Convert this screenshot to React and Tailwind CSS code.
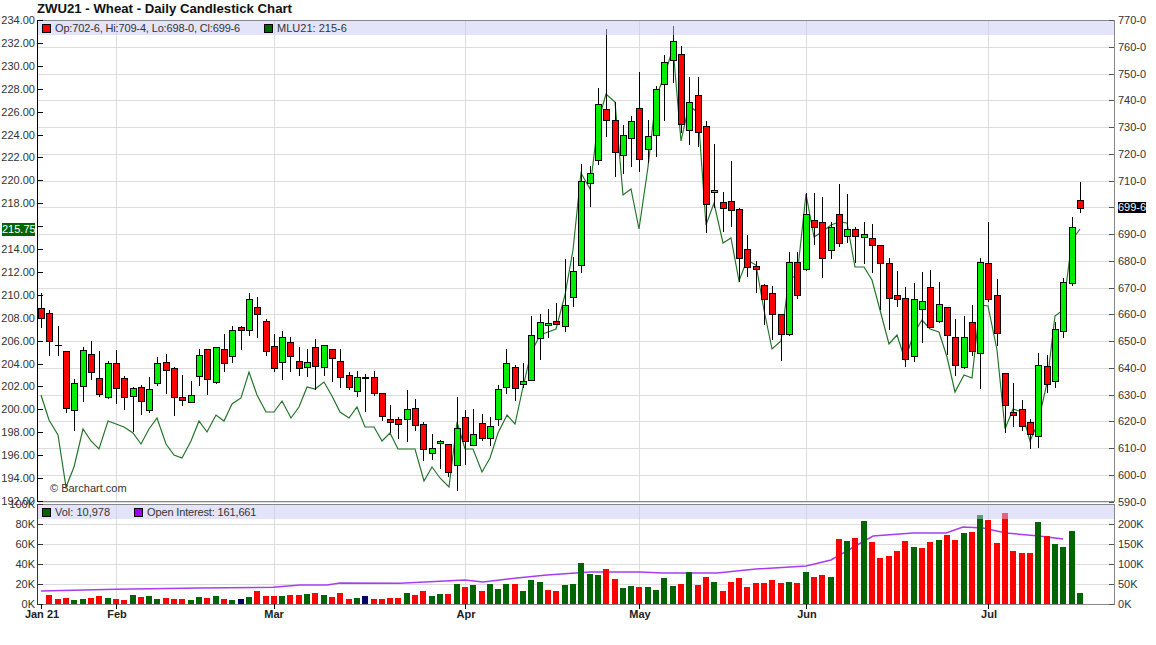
import React from "react";

// [x, high, low, bodyTop, bodyBottom, kind] in page pixels. kind: g up, r down, d doji
const candles = [
  [41, 293, 328, 308, 318, "r"], [49, 310, 356, 313, 341, "r"], [58, 326, 356, 345, 345, "d"], [66, 351, 413, 351, 408, "r"],
  [74, 379, 431, 383, 410, "g"], [83, 347, 402, 350, 386, "g"], [91, 341, 380, 354, 372, "r"], [99, 351, 397, 378, 394, "r"],
  [108, 361, 399, 363, 397, "g"], [116, 350, 404, 363, 388, "r"], [124, 376, 410, 378, 397, "r"], [133, 387, 432, 388, 396, "g"],
  [141, 385, 415, 387, 401, "r"], [149, 377, 413, 389, 410, "g"], [157, 357, 386, 363, 383, "g"], [166, 354, 394, 362, 370, "r"],
  [174, 367, 416, 368, 397, "r"], [182, 375, 406, 397, 400, "r"], [191, 381, 402, 395, 402, "g"], [199, 349, 386, 355, 376, "g"],
  [207, 349, 395, 349, 379, "r"], [216, 347, 384, 347, 382, "g"], [224, 334, 372, 349, 363, "r"], [232, 326, 363, 330, 356, "g"],
  [241, 326, 350, 327, 330, "r"], [249, 293, 336, 299, 330, "g"], [257, 297, 338, 307, 314, "r"], [266, 319, 356, 321, 351, "r"],
  [274, 334, 372, 346, 368, "r"], [282, 331, 380, 337, 362, "g"], [290, 337, 372, 342, 356, "r"], [299, 347, 376, 361, 368, "r"],
  [307, 349, 377, 362, 367, "g"], [315, 339, 390, 347, 366, "r"], [324, 345, 376, 345, 367, "g"], [332, 349, 382, 349, 358, "r"],
  [340, 349, 388, 361, 377, "r"], [349, 372, 390, 375, 387, "r"], [357, 371, 397, 377, 391, "g"], [365, 374, 412, 377, 378, "d"],
  [374, 371, 396, 377, 393, "r"], [382, 393, 421, 393, 416, "r"], [390, 405, 433, 419, 422, "r"], [398, 417, 439, 419, 424, "r"],
  [407, 390, 442, 409, 419, "g"], [415, 399, 431, 408, 425, "r"], [423, 422, 461, 424, 449, "r"], [432, 434, 460, 448, 453, "g"],
  [440, 440, 469, 441, 443, "g"], [448, 444, 477, 444, 472, "r"], [457, 397, 491, 428, 465, "g"], [465, 410, 465, 417, 441, "r"],
  [473, 409, 445, 434, 445, "g"], [482, 414, 441, 423, 438, "r"], [490, 417, 446, 426, 438, "g"], [498, 385, 426, 389, 419, "g"],
  [506, 349, 394, 363, 387, "g"], [515, 365, 401, 367, 388, "r"], [523, 363, 388, 381, 384, "g"], [531, 316, 380, 335, 380, "g"],
  [540, 314, 360, 322, 338, "g"], [548, 309, 338, 323, 325, "g"], [556, 303, 325, 321, 324, "r"], [565, 259, 332, 305, 326, "g"],
  [573, 257, 307, 271, 297, "g"], [581, 164, 273, 181, 265, "g"], [590, 166, 207, 173, 183, "g"], [598, 88, 165, 104, 160, "g"],
  [606, 29, 137, 109, 120, "r"], [615, 102, 177, 120, 152, "r"], [623, 125, 174, 135, 155, "g"], [631, 116, 167, 121, 138, "g"],
  [639, 72, 172, 108, 159, "r"], [648, 120, 163, 136, 149, "g"], [656, 86, 157, 89, 135, "g"], [664, 55, 121, 62, 84, "g"],
  [673, 26, 83, 41, 60, "g"], [681, 46, 133, 54, 124, "r"], [689, 77, 145, 102, 130, "g"], [698, 77, 147, 95, 132, "r"],
  [706, 121, 233, 126, 204, "r"], [714, 144, 208, 190, 192, "g"], [723, 192, 232, 202, 208, "r"], [731, 161, 227, 201, 210, "r"],
  [739, 208, 282, 209, 258, "r"], [747, 235, 277, 249, 267, "r"], [756, 261, 293, 266, 269, "r"], [764, 284, 325, 285, 299, "r"],
  [772, 286, 340, 293, 314, "r"], [781, 314, 361, 314, 334, "r"], [789, 252, 336, 262, 334, "g"], [797, 252, 299, 262, 295, "r"],
  [806, 193, 271, 214, 269, "g"], [814, 193, 245, 220, 227, "r"], [822, 197, 278, 222, 258, "r"], [831, 222, 259, 227, 250, "g"],
  [839, 184, 247, 214, 243, "r"], [847, 194, 243, 229, 236, "g"], [855, 227, 263, 229, 236, "r"], [864, 222, 264, 234, 237, "g"],
  [872, 224, 273, 238, 245, "r"], [880, 245, 310, 245, 263, "r"], [889, 258, 330, 263, 298, "r"], [897, 271, 307, 295, 299, "r"],
  [905, 287, 367, 298, 359, "r"], [914, 283, 362, 299, 356, "g"], [922, 272, 343, 301, 309, "g"], [930, 270, 328, 287, 327, "r"],
  [939, 282, 323, 304, 321, "g"], [947, 307, 355, 307, 335, "r"], [955, 319, 376, 337, 365, "r"], [964, 316, 369, 337, 367, "g"],
  [972, 305, 356, 322, 351, "r"], [980, 258, 389, 262, 353, "g"], [988, 222, 302, 263, 299, "r"], [997, 279, 346, 295, 333, "r"],
  [1005, 373, 433, 373, 405, "r"], [1013, 383, 427, 412, 415, "r"], [1022, 400, 431, 409, 426, "r"], [1030, 419, 449, 422, 434, "r"],
  [1038, 353, 448, 365, 436, "g"], [1047, 355, 393, 366, 384, "r"], [1055, 322, 388, 329, 381, "g"], [1063, 278, 338, 282, 331, "g"],
  [1072, 217, 286, 227, 283, "g"], [1080, 182, 213, 200, 208, "r"],
];

// volume per candle, starting at the second one
const volumes =
  "r9 r5 r6 g4 g5 r6 r8 g6 r5 r4 g9 r7 g8 g5 r6 r5 r5 g4 g7 r6 g8 r5 g4 n5 g7 r13 r8 r8 g8 r9 r9 g10 r11 g9 r7 r11 r5 g6 n8 r5 r5 r6 r6 " +
  "g11 r9 r13 g8 g10 r10 g20 r17 g19 r13 g20 g15 g20 r20 g13 g24 g22 r14 r13 g19 g20 g41 g30 g29 r35 r25 g16 g18 r17 g17 g14 g26 g18 r20 g32 r19 r27 g22 r13 r22 r26 r17 r21 " +
  "r21 r24 r21 g22 r21 g32 r27 r29 g27 r65 g63 r66 g83 r62 r46 r48 r53 r63 g57 r56 r62 g64 r69 r64 g71 r72 g89 r84 r61 r91 r53 r51 r51 g82 r68 g60 g57 g73 g11";

const maLine =
  "41,395 49,420 58,435 66,487 74,467 83,429 91,441 99,449 108,421 116,424 124,427 133,433 141,444 149,429 157,418 166,444 174,455 182,458 191,441 199,421 207,432 216,415 224,421 232,404 241,398 249,372 257,395 266,412 274,412 282,401 291,418 299,407 307,387 315,389 324,382 332,396 340,412 349,418 357,407 365,427 374,427 382,441 390,433 398,449 415,449 424,481 432,467 440,478 449,487 457,422 465,449 473,449 482,472 490,458 498,433 507,415 515,424 523,387 531,353 540,335 548,332 556,329 565,295 573,250 581,173 590,189 598,122 606,94 615,102 623,195 631,189 639,229 648,167 656,97 664,77 673,48 681,141 689,105 698,113 706,225 714,203 723,243 731,238 739,281 747,260 756,265 764,310 772,349 781,341 789,277 797,277 806,194 814,237 822,232 831,225 839,222 847,223 855,267 864,267 872,280 880,310 889,344 897,335 905,360 914,333 922,320 930,329 939,332 947,357 955,392 964,375 972,378 980,305 988,306 997,350 1005,429 1013,409 1022,412 1030,441 1038,423 1047,383 1055,316 1063,310 1072,240 1080,229";

const oiLine =
  "41,591 116,589.3 200,588 273,587.3 300,585 327,585 340,583 400,583.3 465,580 483,582 517,578 547,575 590,572 640,572 663,573 717,573 756,569 806,566 831,560 852,548 873,536 913,533 946,533 963,527 983,528 1006,533 1039,536 1063,539";

// label, tick x, label centre
const months = [
  ["Jan 21", 41, 42], ["Feb", 116, 117], ["Mar", 274, 274], ["Apr", 465, 466], ["May", 639, 640], ["Jun", 806, 807], ["Jul", 988, 989],
];
const monthGrid = months.slice(1).map((m) => m[1]);

const bodyFill = { g: "#00ee00", r: "#ff0000", d: "#000000" };
const volFill = { g: "#006400", r: "#ff0000", n: "#00006e" };

const leftPrices = Array.from({ length: 22 }, (_, i) => 234 - i * 2);
const rightPrices = Array.from({ length: 19 }, (_, i) => 770 - i * 10);
const leftY = (v) => 20 + ((234 - v) / 2) * 22.9;
const rightY = (v) => 20 + ((770 - v) / 10) * 26.75;

function Swatch({ color }) {
  return <span className="w-[7px] h-[7px] box-content border border-black" style={{ backgroundColor: color }} />;
}

function Legend({ items }) {
  return (
    <div className="absolute left-[42px] top-[3px] flex items-center gap-[24px] text-[11px] leading-[14px] text-[#333]">
      {items.map(([color, label, tight]) => (
        <div key={label} className="flex items-center gap-[4px]">
          <Swatch color={color} />
          <span className={tight ? "tracking-[-0.15px]" : ""}>{label}</span>
        </div>
      ))}
    </div>
  );
}

function PriceChart() {
  return (
    <div className="relative h-[484px]">
      <svg viewBox="0 18 1156 484" width="1156" height="484" className="block overflow-visible">
        <g shapeRendering="crispEdges">
          {rightPrices.slice(1).map((v) => (
            <rect key={v} x="38" y={Math.round(rightY(v))} width="1076" height="1" fill="#dddddd" />
          ))}
          {monthGrid.map((x) => (
            <rect key={x} x={x} y="20" width="1" height="482" fill="#dddddd" />
          ))}
        </g>

        <polyline points={maLine} fill="none" stroke="#1f7324" strokeWidth="1.15" />

        <g shapeRendering="crispEdges">
          {candles.map(([x, hi, lo, top, bot, kind]) => (
            <g key={x}>
              <rect x={x} y={hi} width="1" height={lo - hi} fill="#000000" />
              {kind === "d" ? (
                <rect x={x - 3} y={top} width="7" height={bot - top + 1} fill="#000000" />
              ) : (
                <rect x={x - 2.5} y={top + 0.5} width="6" height={bot - top} fill={bodyFill[kind]} stroke="#000000" />
              )}
            </g>
          ))}
          {/* the legend band sits over the candles, half see-through */}
          <rect x="38" y="21" width="1076" height="14" fill="#c8c8f5" fillOpacity="0.5" />
          <rect x="38" y="20" width="1076" height="1" fill="#888888" />
          <rect x="38" y="501" width="1076" height="1" fill="#888888" />
          <rect x="37" y="20" width="1" height="482" fill="#000000" />
          <rect x="1114" y="20" width="1" height="482" fill="#888888" />
          {leftPrices.map((v) => (
            <rect key={v} x="38" y={Math.round(leftY(v))} width="5" height="1" fill="#000000" />
          ))}
          {rightPrices.map((v) => (
            <rect key={v} x="1109" y={Math.round(rightY(v))} width="5" height="1" fill="#555555" />
          ))}
        </g>

        <g className="text-[11px] fill-[#333333]">
          {leftPrices
            .filter((v) => v !== 216)
            .map((v) => (
              <text key={v} x="35" y={leftY(v) + 4} textAnchor="end">
                {v.toFixed(2)}
              </text>
            ))}
          {rightPrices
            .filter((v) => v !== 700)
            .map((v) => (
              <text key={v} x="1118" y={rightY(v) + 4}>
                {v}-0
              </text>
            ))}
          <text x="50" y="492">© Barchart.com</text>
        </g>
      </svg>

      <Legend
        items={[
          ["#ff0000", "Op:702-6, Hi:709-4, Lo:698-0, Cl:699-6", true],
          ["#006400", "MLU21: 215-6"],
        ]}
      />

      <div className="absolute left-[2px] top-[205px] w-[33px] h-[13px] bg-[#006400] text-white text-[11px] leading-[13px] text-center whitespace-nowrap">215.75</div>
      <div className="absolute left-[1118px] top-[184px] w-[28px] h-[11px] bg-black text-white text-[11px] leading-[11px] whitespace-nowrap">699-6</div>
    </div>
  );
}

function VolumeChart() {
  const bars = volumes.split(" ");
  return (
    <div className="relative h-[122px]">
      <svg viewBox="0 502 1156 122" width="1156" height="122" className="block overflow-visible">
        <g shapeRendering="crispEdges">
          {[584, 564, 544, 524].map((y) => (
            <rect key={y} x="38" y={y} width="1076" height="1" fill="#dddddd" />
          ))}
          {monthGrid.map((x) => (
            <rect key={x} x={x} y="504" width="1" height="100" fill="#dddddd" />
          ))}
        </g>

        <polyline points={oiLine} fill="none" stroke="#a93cf2" strokeWidth="1.5" />

        <g shapeRendering="crispEdges">
          {bars.map((b, i) => {
            const h = Number(b.slice(1));
            return <rect key={i} x={candles[i + 1][0] - 3} y={604 - h} width="6" height={h} fill={volFill[b[0]]} />;
          })}
          <rect x="38" y="505" width="1076" height="14" fill="#c8c8f5" fillOpacity="0.5" />
          <rect x="38" y="504" width="1076" height="1" fill="#888888" />
          <rect x="38" y="604" width="1077" height="1" fill="#888888" />
          <rect x="37" y="504" width="1" height="101" fill="#333333" />
          <rect x="1114" y="504" width="1" height="100" fill="#888888" />
          {[604, 584, 564, 544, 524, 504].map((y) => (
            <rect key={y} x="38" y={y} width="5" height="1" fill="#333333" />
          ))}
          {[604, 584, 564, 544, 524].map((y) => (
            <rect key={y} x="1109" y={y} width="5" height="1" fill="#555555" />
          ))}
          {months.map(([label, x]) => (
            <rect key={label} x={x} y="604" width="1" height="5" fill="#000000" />
          ))}
        </g>

        <g className="text-[11px] fill-[#333333]">
          {[0, 20, 40, 60, 80, 100].map((v) => (
            <text key={v} x="35" y={608 - v} textAnchor="end">
              {v}K
            </text>
          ))}
          {[0, 50, 100, 150, 200].map((v) => (
            <text key={v} x="1118" y={608 - v * 0.4}>
              {v}K
            </text>
          ))}
        </g>
        <g className="text-[11px] font-bold fill-[#222222]">
          {months.map(([label, , cx]) => (
            <text key={label} x={cx} y="618" textAnchor="middle">
              {label}
            </text>
          ))}
        </g>
      </svg>

      <Legend
        items={[
          ["#006400", "Vol: 10,978"],
          ["#9900ff", "Open Interest: 161,661", true],
        ]}
      />
    </div>
  );
}

export default function App() {
  return (
    <div className="w-[1156px] h-[645px] bg-white overflow-hidden font-['Liberation_Sans',Arial,sans-serif]">
      <div className="h-[18px] pl-[37px] text-[13.2px] leading-[17px] font-bold text-[#111] whitespace-nowrap">ZWU21 - Wheat - Daily Candlestick Chart</div>
      <PriceChart />
      <VolumeChart />
    </div>
  );
}
